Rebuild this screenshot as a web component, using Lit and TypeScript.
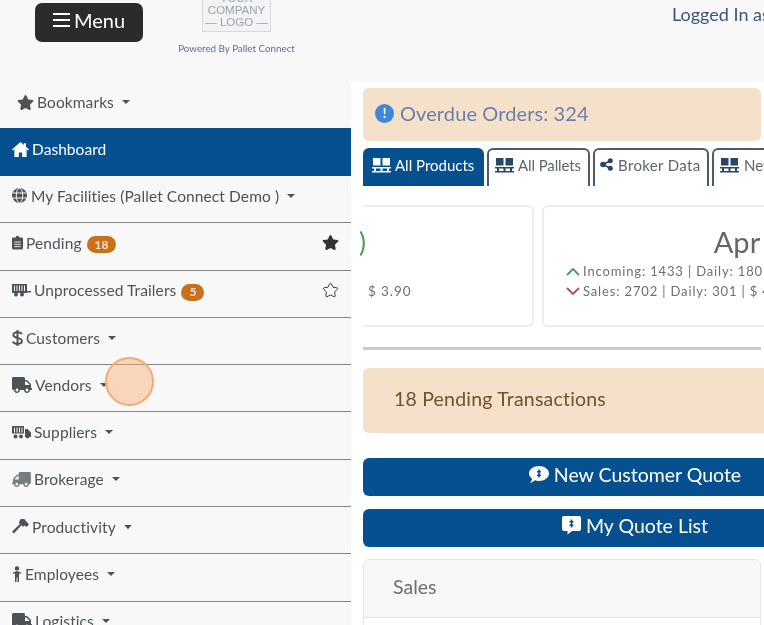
import { LitElement, html, css, svg } from "lit";
import { customElement } from "lit/decorators.js";

const STAR = "M259.3 17.8L194 150.2 47.9 171.5c-26.2 3.8-36.7 36.1-17.7 54.6l105.7 103-25 145.5c-4.5 26.3 23.2 46 46.4 33.7L288 439.6l130.7 68.7c23.2 12.2 50.9-7.4 46.4-33.7l-25-145.5 105.7-103c19-18.5 8.5-50.8-17.7-54.6L382 150.2 316.7 17.8c-11.7-23.6-45.6-23.9-57.4 0z";
const TRUCK = "M624 352h-16V243.9c0-12.7-5.1-24.9-14.1-33.9L494 110.1c-9-9-21.2-14.1-33.9-14.1H416V48c0-26.5-21.5-48-48-48H48C21.5 0 0 21.5 0 48v320c0 26.5 21.5 48 48 48h16c0 53 43 96 96 96s96-43 96-96h128c0 53 43 96 96 96s96-43 96-96h48c8.8 0 16-7.2 16-16v-32c0-8.8-7.2-16-16-16zM160 464c-26.5 0-48-21.5-48-48s21.5-48 48-48 48 21.5 48 48-21.5 48-48 48zm320 0c-26.5 0-48-21.5-48-48s21.5-48 48-48 48 21.5 48 48-21.5 48-48 48zm80-208H416V144h44.1l99.9 99.9V256z";

const icons: Record<string, ReturnType<typeof svg>> = {
  star: svg`<svg class="i" width="17" height="15" viewBox="0 0 576 512"><path d=${STAR}/></svg>`,
  starO: svg`<svg class="i" width="17" height="16" viewBox="0 0 576 512"><path d=${STAR} fill="none" stroke="currentColor" stroke-width="36" transform="translate(29 26) scale(.9)"/></svg>`,
  home: svg`<svg class="i" width="17" height="15" viewBox="0 0 17 15"><path d="M8.5 0 0 7.4l1 1.1 1.4-1.2V15h4.4v-4.6h3.4V15h4.4V7.3l1.4 1.2 1-1.1-3-2.6V1.2h-2.2v1.8z"/></svg>`,
  globe: svg`<svg class="i" width="16" height="15" viewBox="0 0 16 15"><circle cx="7.5" cy="7.5" r="7.5"/><g fill="none" stroke="#f8f8f8" stroke-width="1"><ellipse cx="7.5" cy="7.5" rx="3.2" ry="7.3"/><path d="M.5 5h14M.5 10h14"/></g></svg>`,
  clip: svg`<svg class="i" width="11" height="15" viewBox="0 0 12 15"><path d="M1.5 2H4a2 2 0 0 1 4 0h2.5A1.5 1.5 0 0 1 12 3.5v10a1.5 1.5 0 0 1-1.5 1.5h-9A1.5 1.5 0 0 1 0 13.5v-10A1.5 1.5 0 0 1 1.5 2z"/><path d="M2.5 7h7M2.5 9.5h7M2.5 12h7" stroke="#f8f8f8" stroke-width="1"/></svg>`,
  trailer: svg`<svg class="i" width="19" height="14" viewBox="0 0 19 14"><path d="M0 1h15v7h4v1.5H15V10H0z"/><path d="M2.5 2.5v5.5M5 2.5v5.5M7.5 2.5v5.5M10 2.5v5.5M12.5 2.5v5.5" stroke="#f8f8f8" stroke-width="1"/><circle cx="4" cy="11.5" r="2"/><circle cx="10" cy="11.5" r="2"/></svg>`,
  dollar: svg`<svg class="i" width="11" height="16" viewBox="0 0 11 16"><path d="M9.8 4.2C9.3 2.8 7.8 2.2 5.5 2.2 3 2.2 1.300 3.2 1.300 5c0 4 8.600 1.800 8.600 6 0 1.800-1.800 2.900-4.400 2.900-2.500 0-4.100-.9-4.700-2.400M5.500 0v16" fill="none" stroke="currentColor" stroke-width="1.900"/></svg>`,
  truck: svg`<svg class="i" width="20" height="16" viewBox="0 0 640 512"><path d=${TRUCK}/></svg>`,
  supply: svg`<svg class="i" width="19" height="14" viewBox="0 0 19 14"><path d="M0 1h12v7.500H0z"/><path d="M2.500 2.500v5M5 2.500v5M7.500 2.500v5M10 2.500v5" stroke="#f8f8f8" stroke-width="1"/><path d="M13 4h2.500L19 7.500V12h-6z"/><circle cx="3.500" cy="11.500" r="2"/><circle cx="9" cy="11.500" r="2"/><circle cx="15.500" cy="11.800" r="1.800"/></svg>`,
  broker: svg`<svg class="i muted" width="19" height="15" viewBox="0 0 640 512"><g transform="translate(640 0) scale(-1 1)"><path d=${TRUCK}/></g></svg>`,
  hammer: svg`<svg class="i" width="17" height="15" viewBox="0 0 17 15"><path d="M8.500 0h3.800L17 5.600 14.600 8l-2-1.600L11 8 9.500 6.300 1.900 14.600 0 12.800 7.800 5 6.900 3.400z"/></svg>`,
  person: svg`<svg class="i" width="10" height="16" viewBox="0 0 10 16"><circle cx="5" cy="2.400" r="2.200"/><path d="M1 6.500 5 4.900l4 1.600v1.500L7 7.300V16H5.500v-4.500h-1V16H3V7.300L1 8z"/></svg>`,
  pallet: svg`<svg class="i" width="19" height="16" viewBox="0 0 19 16"><path d="M1 1h7.500v7.500H1zM10.500 1H18v7.500h-7.500zM0 10h19v1.500H0zM0 14h19v1.500H0z"/><path d="M2 11h2v3.500H2zM8.500 11h2v3.500h-2zM15 11h2v3.500h-2z"/></svg>`,
  share: svg`<svg class="i" width="13" height="13" viewBox="0 0 13 13"><circle cx="3" cy="6.500" r="2.800"/><circle cx="10.300" cy="2.700" r="2.500"/><circle cx="10.300" cy="10.300" r="2.500"/><path d="M3 6.500l7.300-3.800M3 6.500l7.300 3.800" stroke="currentColor" stroke-width="1.600"/></svg>`,
  quote: svg`<svg class="i" width="20" height="17" viewBox="0 0 20 17"><path d="M10 0c5.500 0 10 3.300 10 7.500S15.500 15 10 15c-1.500 0-2.800-.2-4-.7C4.700 15.500 3 16.500.8 16.800 2.200 15.500 3 14 3.200 12.700 1.200 11.300 0 9.500 0 7.500 0 3.300 4.500 0 10 0z"/><path d="M8 5h4v1.500H8zM8 8.500h4V10H8zM9.200 3.500h1.600v8H9.200z" fill="#07508f"/></svg>`,
  list: svg`<svg class="i" width="19" height="19" viewBox="0 0 19 19"><path d="M2 0h15a2 2 0 0 1 2 2v11a2 2 0 0 1-2 2h-7l-4.500 3.500V15H2a2 2 0 0 1-2-2V2a2 2 0 0 1 2-2z"/><path d="M7.500 5h4v1.500h-4zM7.500 8.500h4V10h-4zM8.700 3.500h1.600v8H8.700z" fill="#07508f"/></svg>`,
};

const rows = [
  { ic: "globe", label: "My Facilities (Pallet Connect Demo )", caret: true },
  { ic: "clip", label: "Pending", badge: "18", mark: "star" },
  { ic: "trailer", label: "Unprocessed Trailers", badge: "5", mark: "starO" },
  { ic: "dollar", label: "Customers", caret: true },
  { ic: "truck", label: "Vendors", caret: true },
  { ic: "supply", label: "Suppliers", caret: true },
  { ic: "broker", label: "Brokerage", caret: true },
  { ic: "hammer", label: "Productivity", caret: true },
  { ic: "person", label: "Employees", caret: true },
  { ic: "truck", label: "Logistics", caret: true },
];

const tabs = [
  { ic: "pallet", label: "All Products", active: true },
  { ic: "pallet", label: "All Pallets" },
  { ic: "share", label: "Broker Data" },
  { ic: "pallet", label: "New Pallets" },
];

@customElement("app-root")
export class AppRoot extends LitElement {
  static styles = css`
    :host {
      display: block;
      position: relative;
      width: 764px;
      height: 625px;
      overflow: hidden;
      background: #f8f8f8;
      color: #4d5257;
      font-family: Lato, "Noto Sans", sans-serif;
      font-size: 16px;
      filter: blur(0.5px);
    }
    svg.i { fill: currentColor; flex: none; display: block; }
    svg.muted { opacity: .75; }
    .header {
      height: 82px;
      display: flex;
      align-items: flex-start;
      padding-left: 35px;
      box-sizing: border-box;
      overflow: hidden;
    }
    .menu {
      margin-top: 3px;
      width: 108px;
      height: 39px;
      background: #2b2b2b;
      color: #fff;
      border-radius: 7px;
      display: flex;
      align-items: center;
      justify-content: center;
      gap: 4px;
      font-size: 20px;
      flex: none;
      box-sizing: border-box;
      padding-bottom: 5px;
    }
    .bars { width: 17px; height: 14px; border-top: 2px solid #fff; border-bottom: 2px solid #fff; box-sizing: border-box; display: flex; align-items: center; }
    .bars::before { content: ""; display: block; width: 100%; height: 2px; background: #fff; }
    .brand { margin-left: 35px; width: 117px; flex: none; display: flex; flex-direction: column; align-items: center; }
    .logo {
      width: 69px;
      height: 32px;
      box-sizing: border-box;
      border: 1px solid #d6d9dc;
      border-top: none;
      background: #f2f3f4;
      display: flex;
      flex-direction: column;
      justify-content: flex-end;
      align-items: center;
      color: #9aa3ad;
      font-size: 11.500px;
      line-height: 12px;
      overflow: hidden;
      font-family: "Liberation Sans", sans-serif;
      padding-bottom: 3px;
    }
    .powered { margin-top: 10px; font-size: 9.800px; color: #5d6f92; white-space: nowrap; }
    .logged { margin-left: 377px; margin-top: 3px; font-size: 18px; color: #3a5578; white-space: nowrap; flex: none; }
    .body { display: flex; height: 543px; }
    .side { width: 351px; flex: none; overflow: hidden; }
    .book { height: 46px; display: flex; align-items: center; padding-left: 17px; gap: 3px; font-size: 15.500px; box-sizing: border-box; padding-bottom: 6px; letter-spacing: .1px; }
    .dash {
      height: 48px;
      background: #07508f;
      color: #fff;
      display: flex;
      align-items: center;
      gap: 3px;
      padding-left: 12px;
      padding-bottom: 6px;
      box-sizing: border-box;
      font-size: 15.500px;
      letter-spacing: .05px;
    }
    .row {
      height: 47.300px;
      box-sizing: border-box;
      border-bottom: 1.500px solid #85888b;
      display: flex;
      align-items: center;
      gap: 3px;
      padding: 0 12px 7px;
      font-size: 15.500px;
      letter-spacing: .1px;
      white-space: nowrap;
    }
    .row:first-of-type { height: 46.500px; padding-bottom: 5px; }
    .caret { width: 0; height: 0; border-left: 4.500px solid transparent; border-right: 4.500px solid transparent; border-top: 4.500px solid currentColor; margin-left: 5px; }
    .badge { background: #c9701d; color: #f7e2cb; border-radius: 9px; font-size: 12px; font-weight: 700; padding: 2.500px 8px; line-height: 12px; margin: 4px 0 0 2px; letter-spacing: 0; }
    .mark { margin-left: auto; color: #333; }
    .main { flex: 1; min-width: 0; background: #fff; overflow: hidden; padding: 6px 3px 0 12px; box-sizing: border-box; }
    .alert { background: #f5e1ca; border-radius: 6px; box-sizing: border-box; }
    .overdue { height: 53px; display: flex; align-items: center; gap: 6px; padding: 0 0 3px 12px; font-size: 20px; color: #6b7fa8; letter-spacing: .1px; }
    .dot { width: 19px; height: 19px; border-radius: 50%; background: #3f87d8; color: #fff; font-size: 13px; font-weight: 700; display: flex; align-items: center; justify-content: center; letter-spacing: 0; }
    .tabs { display: flex; gap: 3px; margin-top: 7px; height: 38px; width: 500px; }
    .tab {
      flex: none;
      box-sizing: border-box;
      height: 38px;
      display: flex;
      align-items: center;
      gap: 5px;
      padding: 0 0 7px 6px;
      border: 2px solid #4d5d68;
      border-bottom: none;
      border-radius: 6px 6px 0 0;
      font-size: 15px;
      color: #5a6670;
      white-space: nowrap;
    }
    .tab:nth-child(1) { width: 121px; gap: 4px; padding-left: 7px; }
    .tab:nth-child(2) { width: 103px; gap: 4px; letter-spacing: -.1px; }
    .tab:nth-child(3) { width: 116px; letter-spacing: .35px; padding-left: 5px; }
    .tab:nth-child(4) { width: 120px; }
    .tab.active { background: #07508f; border-color: #07508f; color: #fff; }
    .tab svg.i { color: #27476a; }
    .tab.active svg.i { color: #fff; }
    .cards { display: flex; gap: 8px; margin-top: 19px; height: 122px; }
    .card { flex: none; box-sizing: border-box; border: 2px solid #eceded; border-radius: 6px; height: 122px; }
    .card.one { width: 171px; border-left: none; border-radius: 0 6px 6px 0; display: flex; flex-direction: column; }
    .paren { color: #4c9a55; font-size: 26px; line-height: 36px; margin-top: 17px; margin-left: -4px; }
    .price { margin: 23px 0 0 5px; font-size: 13.500px; letter-spacing: .9px; color: #6b6f73; }
    .card.two { width: 390px; color: #6b6f73; }
    .apr { text-align: center; font-size: 29px; line-height: 36px; margin-top: 17px; color: #666; }
    .line { display: flex; align-items: center; gap: 3px; padding-left: 22px; font-size: 13px; letter-spacing: .85px; line-height: 20px; white-space: nowrap; }
    .line svg { flex: none; }
    .line.first { margin-top: 1px; }
    .rule { height: 2.500px; background: #ccc; margin-top: 20px; }
    .pending { width: 544px; height: 65px; margin-top: 18.500px; display: flex; align-items: center; padding: 0 0 4px 31px; font-size: 19.500px; color: #6f5230; letter-spacing: .2px; }
    .btn { width: 544px; height: 38px; background: #07508f; color: #fff; border-radius: 6px; display: flex; align-items: center; justify-content: center; gap: 5px; font-size: 19.500px; box-sizing: border-box; padding-bottom: 5px; }
    .btn.a { margin-top: 25px; }
    .btn.b { margin-top: 13px; }
    .panel { margin-top: 12px; border: 1px solid #e4e5e6; border-radius: 6px 6px 0 0; background: #fff; height: 80px; }
    .panel-h { height: 58px; background: #f7f7f7; border-bottom: 1.500px solid #e2e3e4; display: flex; align-items: center; padding: 0 0 4px 29px; font-size: 19.500px; color: #6b6f73; box-sizing: border-box; border-radius: 6px 6px 0 0; }
    .spot {
      position: absolute;
      left: 105px;
      top: 357px;
      width: 49px;
      height: 49px;
      box-sizing: border-box;
      border-radius: 50%;
      background: rgba(250, 165, 105, .42);
      border: 2px solid #f3ab70;
    }
  `;

  render() {
    return html`
      <div class="header">
        <div class="menu"><span class="bars"></span><span>Menu</span></div>
        <div class="brand">
          <div class="logo"><span>YOUR</span><span>COMPANY</span><span>— LOGO —</span></div>
          <div class="powered">Powered By Pallet Connect</div>
        </div>
        <div class="logged">Logged In as Demo User</div>
      </div>
      <div class="body">
        <nav class="side">
          <div class="book">${icons.star}<span>Bookmarks</span><span class="caret"></span></div>
          <div class="dash">${icons.home}<span>Dashboard</span></div>
          ${rows.map(
            (r) => html`<div class="row">
              ${icons[r.ic]}<span>${r.label}</span>
              ${r.badge ? html`<span class="badge">${r.badge}</span>` : ""}
              ${r.caret ? html`<span class="caret"></span>` : ""}
              ${r.mark ? html`<span class="mark">${icons[r.mark]}</span>` : ""}
            </div>`
          )}
        </nav>
        <main class="main">
          <div class="alert overdue"><span class="dot">!</span><span>Overdue Orders: 324</span></div>
          <div class="tabs">
            ${tabs.map(
              (t) => html`<div class="tab ${t.active ? "active" : ""}">${icons[t.ic]}<span>${t.label}</span></div>`
            )}
          </div>
          <div class="cards">
            <div class="card one"><span class="paren">)</span><span class="price">$ 3.90</span></div>
            <div class="card two">
              <div class="apr">Apr</div>
              <div class="line first">
                <svg width="14" height="9" viewBox="0 0 14 9"><path d="M1 8l6-6 6 6" fill="none" stroke="#4c9a55" stroke-width="1.800"/></svg>
                <span>Incoming: 1433 | Daily: 180 | $ 3.90</span>
              </div>
              <div class="line">
                <svg width="14" height="9" viewBox="0 0 14 9"><path d="M1 1l6 6 6-6" fill="none" stroke="#b04a62" stroke-width="1.800"/></svg>
                <span>Sales: 2702 | Daily: 301 | $ 4.10</span>
              </div>
            </div>
          </div>
          <div class="rule"></div>
          <div class="alert pending">18 Pending Transactions</div>
          <div class="btn a">${icons.quote}<span>New Customer Quote</span></div>
          <div class="btn b">${icons.list}<span>My Quote List</span></div>
          <div class="panel"><div class="panel-h">Sales</div></div>
        </main>
      </div>
      <div class="spot"></div>
    `;
  }
}
